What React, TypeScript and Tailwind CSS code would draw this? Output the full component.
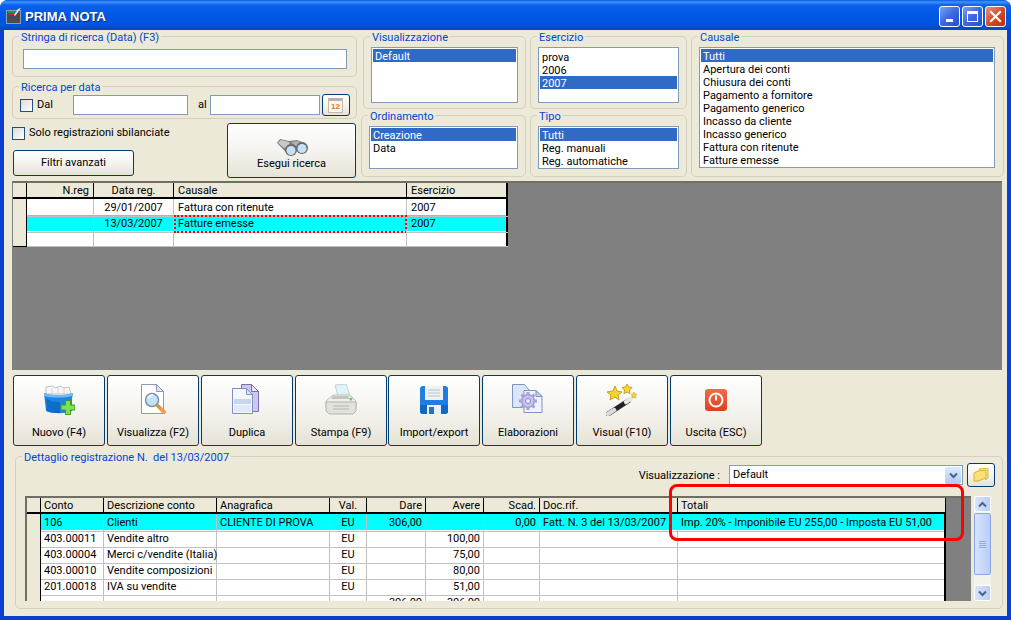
import React from "react";

const Group = ({ label, className, inner, children }: { label: string; className: string; inner?: string; children?: React.ReactNode }) => (
  <fieldset className={`border border-[#d3d0bf] rounded-[5px] min-w-0 ${className}`}>
    <legend className="ml-[6px] px-[2px] text-[#0046d5] leading-[15px] h-[13px] whitespace-pre">{label}</legend>
    <div className={inner}>{children}</div>
  </fieldset>
);

const ListBox = ({ items, selected, className }: { items: string[]; selected: number; className: string }) => (
  <div className={`bg-white border border-[#7f9db9] p-[1px] ${className}`}>
    {items.map((t, i) => (
      <div key={t} className={`h-[13px] leading-[15px] pl-[2px] whitespace-nowrap ${i === selected ? "bg-[#316ac5] text-white" : "text-black"}`}>{t}</div>
    ))}
  </div>
);

const Input = ({ className }: { className: string }) => <div className={`h-[20px] bg-white border border-[#7f9db9] ${className}`} />;

const Check = () => <div className="w-[13px] h-[13px] shrink-0 border border-[#1c5180] bg-gradient-to-br from-[#dcdcd7] to-[#fff]" />;

const Btn = ({ className, children }: { className: string; children?: React.ReactNode }) => (
  <div className={`border border-[#003c74] rounded-[3px] bg-gradient-to-b from-white via-[#f4f3ee] to-[#e6e3d6] text-black ${className}`}>{children}</div>
);

const IconNuovo = () => (
  <svg width="32" height="32" viewBox="0 0 32 32">
    <path d="M3 3l7-1 2 2 6-2 2 2 6-1 2 7H3z" fill="#f6f6f6" stroke="#c0c0c0" strokeWidth="1" />
    <path d="M9 4v6M15 4v6M21 4v6" stroke="#d4d4d4" />
    <path d="M1 9c7 3 22 3 29 0l-1 6v12c-6 3-20 3-26 0z" fill="#1f86e0" />
    <path d="M1 9c7 3 22 3 29 0l-.500 3c-9 2-20 2-28 0z" fill="#6fbcf2" />
    <path d="M3 14c1 6 1 9 1 13 5 2 9 2 13 2V18C11 18 6 17 3 14z" fill="#0f6cc8" />
    <path d="M22.500 16.500h5v4.500h4.500v5h-4.500v4.500h-5v-4.500H18v-5h4.500z" fill="#7fe050" stroke="#3a9a2a" strokeWidth="1" />
  </svg>
);
const IconVisualizza = () => (
  <svg width="32" height="32" viewBox="0 0 32 32">
    <path d="M4.500 .5h15l7 7v22h-22z" fill="#fff" stroke="#8c96c0" />
    <path d="M19.500 .5v7h7z" fill="#d8e4f8" stroke="#8c96c0" />
    <circle cx="15" cy="16" r="6.500" fill="#bfe4fa" stroke="#7f93a8" strokeWidth="1.500" />
    <path d="M11 14c1-2 3-3 5-3" stroke="#fff" strokeWidth="1.500" fill="none" />
    <path d="M20 21l7 7" stroke="#d09050" strokeWidth="3.500" strokeLinecap="round" />
    <path d="M24 25l3 3" stroke="#f4a040" strokeWidth="3.500" strokeLinecap="round" />
  </svg>
);
const IconDuplica = () => (
  <svg width="32" height="32" viewBox="0 0 32 32">
    <path d="M10.500 .5h10l7 7v20h-17z" fill="#cfc8ee" stroke="#7a6db0" />
    <path d="M20.500 .5v7h7z" fill="#e8e4f8" stroke="#7a6db0" />
    <path d="M1.500 4.500h14l6 6v19h-20z" fill="#f4f8fe" stroke="#7f8fc0" />
    <path d="M15.500 4.500v6h6z" fill="#d8e4f8" stroke="#7f8fc0" />
    <path d="M3 15h17v5H3z" fill="#c6d6f2" />
    <path d="M3 21h17v7H3z" fill="#dfe8f8" />
  </svg>
);
const IconStampa = () => (
  <svg width="32" height="32" viewBox="0 0 32 32">
    <path d="M10 1l11-1 4 12H13z" fill="#dff3fa" stroke="#c4d0d4" />
    <path d="M1 17l7-6h17l6 6v7H1z" fill="#eeeeea" stroke="#c0c0ba" />
    <path d="M1 18h30v9l-3 3H4l-3-3z" fill="#e2e2dc" stroke="#b4b4ae" />
    <path d="M8 12h15l2 3H6z" fill="#c4c4be" />
    <path d="M8 22h16M8 25h16" stroke="#b4b4b4" />
    <circle cx="26" cy="15" r="1.500" fill="#60d060" />
  </svg>
);
const IconFloppy = () => (
  <svg width="30" height="30" viewBox="0 0 30 30">
    <rect x="1" y="1" width="28" height="28" rx="3" fill="#1f7fe0" />
    <path d="M1 20h28v6a3 3 0 0 1-3 3H4a3 3 0 0 1-3-3z" fill="#1468c0" />
    <rect x="6" y="1" width="18" height="14" fill="#f0f0f0" />
    <path d="M9 5h12M9 8h12M9 11h12" stroke="#b8c4d4" />
    <rect x="8" y="20" width="14" height="9" fill="#e8eef8" />
    <rect x="10" y="22" width="5" height="7" fill="#2a70c0" />
  </svg>
);
const IconElab = () => (
  <svg width="32" height="32" viewBox="0 0 32 32">
    <path d="M.5.5h12l5 6v17H.5z" fill="#dbe6fb" stroke="#7f93c8" />
    <path d="M12 6.500h12l6 6v16H12z" fill="#eef3fe" stroke="#7f93c8" />
    <path d="M24 6.500v6h6z" fill="#bfd0f2" stroke="#7f93c8" />
    <g transform="translate(16 17)">
      <circle r="6.500" fill="#bdb6e6" stroke="#8a82b8" />
      <g stroke="#a8a0d8" strokeWidth="3">
        <path d="M0-9V9M-9 0H9M-6.500-6.500l13 13M-6.500 6.500l13-13" />
      </g>
      <circle r="5.500" fill="#c8c2ee" />
      <circle r="2.500" fill="#f0eefc" stroke="#8a82b8" />
    </g>
  </svg>
);
const IconWand = () => (
  <svg width="32" height="32" viewBox="0 0 32 32">
    <path d="M2 30l20-13" stroke="#222" strokeWidth="5" strokeLinecap="round" />
    <path d="M2 30l6-4" stroke="#ddd" strokeWidth="4.500" strokeLinecap="round" />
    <path d="M20 18l7-5" stroke="#e8e8e8" strokeWidth="4.500" strokeLinecap="round" />
    <path d="M9 2l2 5 5 1-4 3 1 5-4-3-5 3 1-5-4-3 6-1z" fill="#f4d42c" stroke="#c8a020" />
    <path d="M21 0l1.500 3 3.500.5-2.500 2.500.5 3.500-3-1.500-3 1.500.5-3.500L16 3.500 19.500 3z" fill="#f6d838" stroke="#c8a020" />
    <path d="M28 8l1 2 2 .5-1.500 1.500.5 2-2-1-2 1 .5-2-1.500-1.500 2-.5z" fill="#f6d838" stroke="#c8a020" strokeWidth=".6" />
  </svg>
);
const IconExit = () => (
  <svg width="24" height="24" viewBox="0 0 24 24">
    <defs><linearGradient id="ex" x1="0" y1="0" x2="0" y2="1"><stop offset="0" stopColor="#f46a4a" /><stop offset="1" stopColor="#e0401c" /></linearGradient></defs>
    <rect width="22" height="22" x="1" y="1" rx="3" fill="url(#ex)" />
    <circle cx="12" cy="12" r="6.500" fill="none" stroke="#fff" strokeWidth="2" />
    <path d="M12 7.500v5" stroke="#fff" strokeWidth="2" />
  </svg>
);
const IconBinoculars = () => (
  <svg width="32" height="20" viewBox="0 0 32 20">
    <path d="M1 6l3-4 9 2 8-1 8 3 1 5-8 1-3 4-7 2-5-6z" fill="#7e7e7e" />
    <path d="M2 6l3-3 8 2 1 4-6 2z" fill="#c8c8c8" />
    <path d="M15 5l7-1 5 3-6 3z" fill="#b0b0b0" />
    <circle cx="15" cy="13" r="6" fill="#6a6a6a" />
    <circle cx="15" cy="13.500" r="4.500" fill="#c4e0fa" />
    <circle cx="26" cy="11" r="6" fill="#6a6a6a" />
    <circle cx="26" cy="11.500" r="4.500" fill="#c4e0fa" />
  </svg>
);
const IconCal = () => (
  <svg width="16" height="16" viewBox="0 0 16 16">
    <rect x=".5" y="1.500" width="14" height="14" fill="#fbf6ee" stroke="#c8b8a8" />
    <rect x="1" y="1" width="13" height="3" fill="#b8b0b8" />
    <text x="7.500" y="12" fontSize="8" fontWeight="bold" fill="#f0701c" textAnchor="middle" fontFamily="Liberation Sans, sans-serif">12</text>
  </svg>
);
const IconFolder = () => (
  <svg width="16" height="14" viewBox="0 0 16 14">
    <path d="M6 1l9-1v10l-2 2z" fill="#f8e8a0" stroke="#d8b84c" />
    <path d="M1 5l4-2 8-1v8l-8 3-4 0z" fill="#fbe078" stroke="#d8b030" />
  </svg>
);
const AppIcon = () => (
  <svg width="16" height="16" viewBox="0 0 16 16">
    <rect x=".5" y="2.500" width="14" height="13" fill="#4c4c4c" stroke="#e8e8e8" strokeDasharray="1 1" />
    <path d="M2 3h8v2H2z" fill="#1a9a3a" />
    <path d="M3 5h6v2H3z" fill="#e02030" />
    <path d="M4 7h4l-1 2H5z" fill="#2040d0" />
    <path d="M12 1l3-1-6 8-1-1z" fill="#f0f0f0" />
  </svg>
);

const Chevron = ({ up }: { up?: boolean }) => (
  <svg width="9" height="7" viewBox="0 0 9 7">
    <path d={up ? "M1 5.500l3.500-3.500 3.500 3.500" : "M1 1.500l3.500 3.500 3.500-3.500"} fill="none" stroke="#4d6185" strokeWidth="2" />
  </svg>
);

const WinBtn = ({ red, children }: { red?: boolean; children: React.ReactNode }) => (
  <div className={`w-[21px] h-[21px] rounded-[3px] border border-white flex items-center justify-center ${red ? "bg-gradient-to-br from-[#e8937c] via-[#d84a24] to-[#b8300c]" : "bg-gradient-to-br from-[#7f9ff0] via-[#3a68e0] to-[#2450c8]"}`}>{children}</div>
);

const tools: [string, React.ReactNode, string][] = [
  ["Nuovo (F4)", <IconNuovo />, "pt-[8px]"],
  ["Visualizza (F2)", <IconVisualizza />, "pt-[8px]"],
  ["Duplica", <IconDuplica />, "pt-[8px]"],
  ["Stampa (F9)", <IconStampa />, "pt-[8px]"],
  ["Import/export", <IconFloppy />, "pt-[9px] -ml-[1px]"],
  ["Elaborazioni", <IconElab />, "pt-[8px]"],
  ["Visual (F10)", <IconWand />, "pt-[8px]"],
  ["Uscita (ESC)", <IconExit />, "pt-[12px]"],
];

const topCols = "grid grid-cols-[14px_67px_80px_233px_101px]";
const topRows = [
  ["", "", "29/01/2007", "Fattura con ritenute", "2007"],
  ["", "", "13/03/2007", "Fatture emesse", "2007"],
  ["", "", "", "", ""],
];

const detCols = "grid grid-cols-[14px_63px_113px_113px_37px_59px_58px_56px_138px_268px]";
const detHead = ["", "Conto", "Descrizione conto", "Anagrafica", "Val.", "Dare", "Avere", "Scad.", "Doc.rif.", "Totali"];
const detAlign = ["", "", "", "", "text-center", "text-right", "text-right", "text-right", "", ""];
const detRows = [
  ["", "106", "Clienti", "CLIENTE DI PROVA", "EU", "306,00", "", "0,00", "Fatt. N. 3 del 13/03/2007", "Imp. 20% - Imponibile EU 255,00 - Imposta EU 51,00"],
  ["", "403.00011", "Vendite altro", "", "EU", "", "100,00", "", "", ""],
  ["", "403.00004", "Merci c/vendite (Italia)", "", "EU", "", "75,00", "", "", ""],
  ["", "403.00010", "Vendite composizioni", "", "EU", "", "80,00", "", "", ""],
  ["", "201.00018", "IVA su vendite", "", "EU", "", "51,00", "", "", ""],
  ["", "", "", "", "", "306,00", "306,00", "", "", ""],
];

export default function App() {
  return (
    <div className="w-[1011px] h-[620px] overflow-hidden bg-[#0a3fd0] flex flex-col text-[11px] text-black font-['Roboto',Arial,sans-serif] rounded-t-[8px] relative">
      <div className="h-[30px] shrink-0 flex items-center pl-[6px] pr-[5px] bg-[linear-gradient(180deg,#0a5ae0_0px,#3e93ff_2px,#0d62ec_5px,#0058e6_14px,#0054df_24px,#0048c4_30px)]">
        <div className="mt-[1px] flex"><AppIcon /></div>
        <span className="ml-[3px] mt-[4px] text-white font-bold text-[13px] leading-[16px] font-['Liberation_Sans',Arial,sans-serif] [text-shadow:1px_1px_#0a2a80]">PRIMA NOTA</span>
        <div className="ml-auto mt-[2px] flex gap-[2px]">
          <WinBtn><div className="w-[7px] h-[3px] bg-white mt-[9px] -ml-[1px]" /></WinBtn>
          <WinBtn><div className="w-[11px] h-[11px] border border-white border-t-[3px]" /></WinBtn>
          <WinBtn red>
            <svg width="13" height="13" viewBox="0 0 13 13"><path d="M2 2l9 9M11 2l-9 9" stroke="#fff" strokeWidth="2.200" strokeLinecap="square" /></svg>
          </WinBtn>
        </div>
      </div>

      <div className="mx-[4px] mb-[4px] flex-1 min-h-0 bg-[#ece9d8] flex flex-col">
        {/* top filters */}
        <div className="h-[151px] shrink-0 flex pl-[8px]">
          <div className="w-[345px] shrink-0">
            <Group label="Stringa di ricerca (Data) (F3)" className="h-[47px]" inner="pl-[10px] pr-[9px]">
              <Input className="mt-[6px]" />
            </Group>
            <Group label="Ricerca per data" className="mt-[3px] h-[39px]" inner="pl-[7px] pr-[6px]">
              <div className="flex items-center mt-[1px] h-[22px]">
                <Check />
                <span className="ml-[4px] w-[36px] mt-[1px]">Dal</span>
                <Input className="w-[115px]" />
                <span className="ml-[10px] w-[12px]">al</span>
                <Input className="w-[110px]" />
                <Btn className="ml-[2px] w-[28px] h-[22px] flex items-center justify-center"><IconCal /></Btn>
              </div>
            </Group>
            <div className="flex mt-[4px]">
              <div className="w-[215px] shrink-0">
                <div className="flex items-center h-[14px] mt-[3px]">
                  <Check />
                  <span className="ml-[4px]">Solo registrazioni sbilanciate</span>
                </div>
                <Btn className="ml-[1px] mt-[10px] w-[121px] h-[26px] flex items-center justify-center">Filtri avanzati</Btn>
              </div>
              <Btn className="w-[129px] h-[55px] flex flex-col items-center pt-[13px]">
                <IconBinoculars />
                <span className="mt-[-1px]">Esegui ricerca</span>
              </Btn>
            </div>
          </div>
          <div className="w-[165px] ml-[4px] shrink-0">
            <Group label="Visualizzazione" className="ml-[2px] h-[79px]" inner="px-[7px]">
              <ListBox items={["Default"]} selected={0} className="mt-[4px] h-[56px]" />
            </Group>
            <Group label="Ordinamento" className="h-[68px]" inner="px-[7px]">
              <ListBox items={["Creazione", "Data"]} selected={0} className="mt-[4px] h-[43px]" />
            </Group>
          </div>
          <div className="w-[157px] ml-[4px] shrink-0">
            <Group label="Esercizio" className="h-[79px]" inner="px-[7px]">
              <ListBox items={["prova", "2006", "2007"]} selected={2} className="mt-[4px] h-[56px] pt-[2px]" />
            </Group>
            <Group label="Tipo" className="h-[68px]" inner="px-[7px]">
              <ListBox items={["Tutti", "Reg. manuali", "Reg. automatiche"]} selected={0} className="mt-[4px] h-[43px]" />
            </Group>
          </div>
          <div className="w-[313px] ml-[4px] shrink-0">
            <Group label="Causale" className="h-[147px]" inner="pl-[7px] pr-[8px]">
              <ListBox
                items={["Tutti", "Apertura dei conti", "Chiusura dei conti", "Pagamento a fornitore", "Pagamento generico", "Incasso da cliente", "Incasso generico", "Fattura con ritenute", "Fatture emesse"]}
                selected={0}
                className="mt-[4px] h-[121px]"
              />
            </Group>
          </div>
        </div>

        {/* registrations grid */}
        <div className="ml-[8px] w-[990px] h-[189px] shrink-0 bg-[#808080] border-t-2 border-[#716f64] pl-[1px]">
          <div className="w-[495px] border-r-2 border-black">
            <div className={`${topCols} h-[16px] bg-[#ece9d8] border-b-2 border-black leading-[15px]`}>
              {["", "N.reg", "Data reg.", "Causale", "Esercizio"].map((h, i) => (
                <div key={i} className={`px-[4px] border-r border-black last:border-r-0 ${i === 1 ? "text-right" : i === 2 ? "text-center" : ""}`}>{h}</div>
              ))}
            </div>
            {topRows.map((r, ri) => (
              <div key={ri} className={`${topCols} h-[16px] leading-[17px] ${ri === 1 ? "bg-[#00ffff]" : "bg-white"}`}>
                {r.map((c, i) => (
                  <div
                    key={i}
                    className={`whitespace-nowrap ${i === 0 ? "bg-[#ece9d8] border-b border-r border-black" : "border-b border-r border-[#c0c0c0] last:border-r-0"} ${ri === 1 && i === 3 ? "outline-2 -outline-offset-2 outline-dotted outline-[#f00] pl-[4px]" : "px-[4px]"} ${i === 2 ? "text-center" : ""}`}
                  >
                    {c}
                  </div>
                ))}
              </div>
            ))}
          </div>
        </div>

        {/* toolbar */}
        <div className="flex gap-[2px] ml-[9px] mt-[5px] shrink-0">
          {tools.map(([label, icon, pt]) => (
            <Btn key={label} className={`relative w-[92px] h-[71px] flex flex-col items-center ${pt}`}>
              {icon}
              <span className="absolute left-0 right-0 top-[49px] text-center">{label}</span>
            </Btn>
          ))}
        </div>

        {/* detail */}
        <Group label="Dettaglio registrazione N.  del 13/03/2007" className="ml-[11px] mt-[4px] w-[988px] h-[159px]" inner="relative">
          <div className="flex items-center justify-end h-[24px] pr-[7px]">
            <span className="mr-[9px] mt-[2px]">Visualizzazione :</span>
            <div className="w-[234px] h-[20px] bg-white border border-[#7f9db9] flex items-center pl-[3px] justify-between">
              <span>Default</span>
              <div className="w-[16px] h-[17px] mr-[1px] rounded-[2px] bg-gradient-to-b from-[#e1eafe] to-[#aec8f7] flex items-center justify-center"><Chevron /></div>
            </div>
            <Btn className="ml-[4px] w-[28px] h-[24px] flex items-center justify-center"><IconFolder /></Btn>
          </div>
          <div className="flex mt-[9px] ml-[9px]">
            <div className="w-[946px] h-[105px] bg-[#808080] border-t-2 border-l-2 border-[#716f64] overflow-hidden">
              <div className="w-[918px]">
                <div className={`${detCols} h-[16px] bg-[#ece9d8] border-b-2 border-black leading-[16px]`}>
                  {detHead.map((h, i) => (
                    <div key={i} className={`border-r border-black px-[3px] ${detAlign[i]}`}>{h}</div>
                  ))}
                </div>
                {detRows.map((r, ri) => (
                  <div key={ri} className={`${detCols} h-[16px] leading-[17px] ${ri === 0 ? "bg-[#00ffff]" : "bg-white"}`}>
                    {r.map((c, i) => (
                      <div key={i} className={`whitespace-nowrap px-[3px] ${i === 0 ? "bg-[#ece9d8] border-b border-r border-black" : "border-b border-r border-[#c0c0c0]"} ${i === 9 ? "border-r-2 border-r-black" : ""} ${detAlign[i]}`}>{c}</div>
                    ))}
                  </div>
                ))}
              </div>
            </div>
            <div className="ml-[3px] w-[17px] h-[105px] bg-[#f3f3ee] flex flex-col">
              <div className="h-[16px] rounded-[2px] border border-white bg-gradient-to-r from-[#d8e4fd] to-[#b8cdf9] flex items-center justify-center"><Chevron up /></div>
              <div className="mt-[1px] h-[62px] rounded-[2px] border border-[#8aa8e8] bg-gradient-to-r from-[#d8e4fd] to-[#b8cdf9] flex flex-col items-center justify-center gap-[1px]">
                <div className="w-[7px] h-[1px] bg-[#8caaf0]" />
                <div className="w-[7px] h-[1px] bg-[#8caaf0]" />
                <div className="w-[7px] h-[1px] bg-[#8caaf0]" />
                <div className="w-[7px] h-[1px] bg-[#8caaf0]" />
              </div>
              <div className="mt-auto h-[16px] rounded-[2px] border border-white bg-gradient-to-r from-[#d8e4fd] to-[#b8cdf9] flex items-center justify-center"><Chevron /></div>
            </div>
          </div>
          <div className="absolute left-[653px] top-[21px] w-[295px] h-[57px] border-[3px] border-[#f00] rounded-[8px]" />
        </Group>
      </div>
    </div>
  );
}
